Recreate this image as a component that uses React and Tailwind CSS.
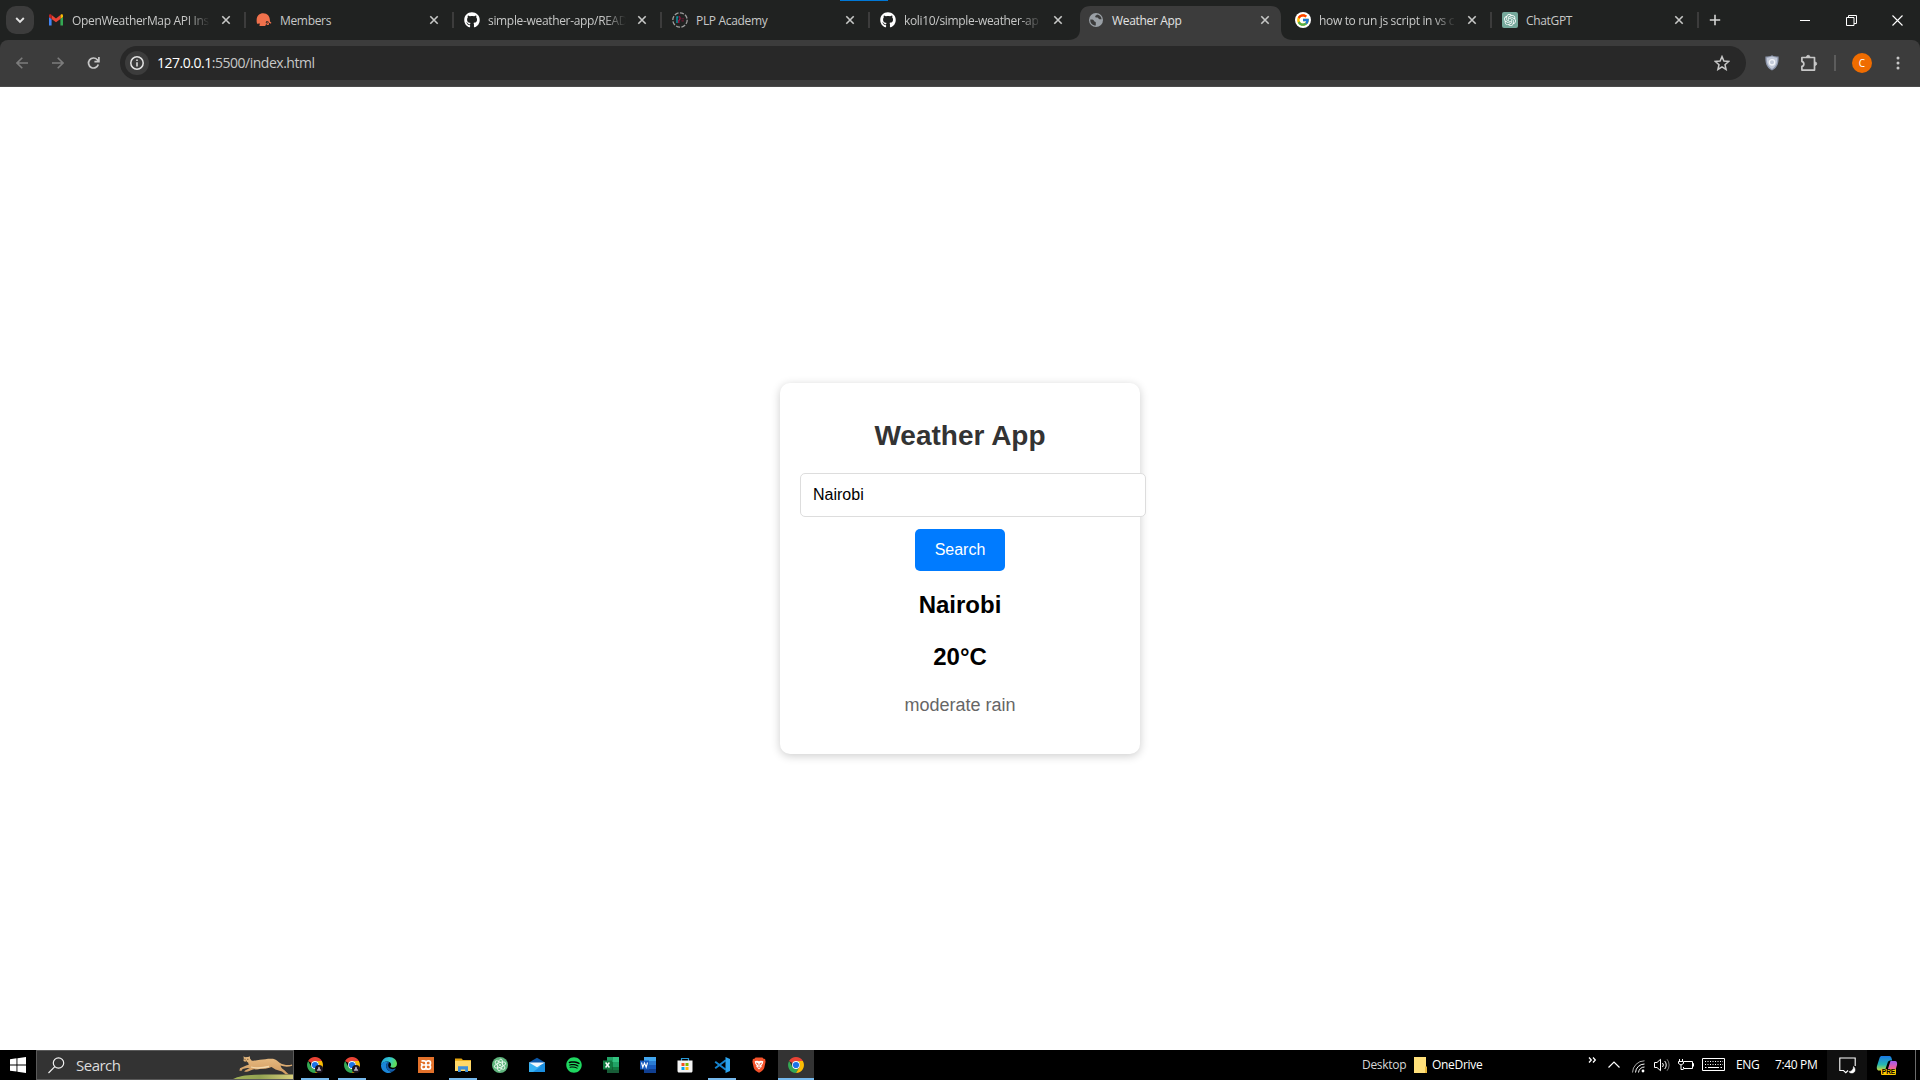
import React from "react";
import { FaGithub, FaSpotify } from "react-icons/fa";
import { FcGoogle } from "react-icons/fc";
import { SiOpenai } from "react-icons/si";

const UI = "font-['Open_Sans','Noto_Sans',sans-serif]";

function Close() {
  return (
    <svg width="16" height="16" viewBox="0 0 16 16" className="shrink-0" fill="none" stroke="#c7c8c7" strokeWidth="1.6">
      <path d="M4.3 4.3l7.4 7.4M11.7 4.3l-7.4 7.4" />
    </svg>
  );
}

function Gmail() {
  return (
    <svg width="16" height="16" viewBox="0 0 16 16">
      <path d="M1 13.4h2.6V7L1 5z" fill="#4285f4" />
      <path d="M12.4 13.4H15V5l-2.600 2z" fill="#34a853" />
      <path d="M12.400 3.600V7L15 5V3.600c0-1.300-1.300-1.700-2.200-1z" fill="#fbbc04" />
      <path d="M3.600 7V3.100L8 6.400l4.400-3.300V7L8 10.300z" fill="#ea4335" />
      <path d="M1 3.600V5l2.600 2V3.100L3.200 2.600C2.300 1.900 1 2.300 1 3.600z" fill="#c5221f" />
    </svg>
  );
}

function Members() {
  return (
    <svg width="16" height="16" viewBox="0 0 16 16" fill="#f0714c">
      <path d="M.8 10.500C-.2 4.500 3 1.200 7.200 1.200c4.300 0 6.900 3 6.800 8.300l1.400 1.300-.5 1-1.700-1-.5 2.200H11l-.8-1.200-1 2.200H3.400l.5-2.600-2.900.300z" />
      <circle cx="11.200" cy="10.200" r="1.300" fill="#202221" />
      <circle cx="11.200" cy="10.200" r=".6" />
    </svg>
  );
}

function Plp() {
  return (
    <svg width="16" height="16" viewBox="0 0 16 16" fill="none">
      <circle cx="8" cy="8" r="7.200" stroke="#9b9b9b" strokeWidth="1.300" strokeDasharray="4.200 1.400" />
      <path d="M5 11V5h1.300" stroke="#0a98a8" strokeWidth="1.400" />
      <path d="M6.800 4.500c1.700 0 1.700 3.500 0 4V11" stroke="#b01548" strokeWidth="1.200" />
      <path d="M9.500 6.700h2.600M9.500 8.900h2.300" stroke="#6b1a34" strokeWidth="1.100" />
    </svg>
  );
}

function Globe() {
  return (
    <svg width="14" height="14" viewBox="0 0 14 14">
      <circle cx="7" cy="7" r="7" fill="#9aa0a6" />
      <path d="M1.300 6.500c1.800-.2 3.400.2 3.800 1.500.3.900 1.700.4 1.700 1.500v3.100C3.300 12.500 1 10 1.300 6.500zM8 1.400c-.3 1-1.800.9-1.800 2 0 1 .9 1.200 2.200 1.200 1 0 .8 1.600 2 1.600h2.200C12.500 3.600 10.500 1.500 8 1.400z" fill="#3c3c3c" />
    </svg>
  );
}

function GoogleIcon() {
  return (
    <span className="flex h-4 w-4 items-center justify-center rounded-full bg-white">
      <FcGoogle size={14} />
    </span>
  );
}

function Gpt() {
  return (
    <span className="flex h-4 w-4 items-center justify-center rounded-[2px] bg-[#75a99c]">
      <SiOpenai size={12} color="#fff" />
    </span>
  );
}

const github = <FaGithub size={16} color="#fff" />;

const tabs = [
  { icon: <Gmail />, title: "OpenWeatherMap API Ins", w: "w-[208px]", fade: true },
  { icon: <Members />, title: "Members", w: "w-[208px]" },
  { icon: github, title: "simple-weather-app/READ", w: "w-[208px]", fade: true },
  { icon: <Plp />, title: "PLP Academy", w: "w-[208px]" },
  { icon: github, title: "koli10/simple-weather-ap", w: "w-[208px]", fade: true, noSep: true },
  { icon: <Globe />, title: "Weather App", w: "w-[207px]", active: true },
  { icon: <GoogleIcon />, title: "how to run js script in vs c", w: "w-[207px]", fade: true },
  { icon: <Gpt />, title: "ChatGPT", w: "w-[207px]" },
];

function Tab({ icon, title, w, fade, active, noSep }) {
  return (
    <div className={`relative flex h-full shrink-0 items-center ${w}`}>
      {active && (
        <svg className="absolute left-[-10px] top-[6px]" width="225" height="34" viewBox="0 0 225 34" fill="#3c3c3c">
          <path d="M0 34c8 0 12-4 12-11V10C12 4 16 0 22 0h181c6 0 10 4 10 10v13c0 7 4 11 12 11z" />
        </svg>
      )}
      <div className="relative flex h-full w-full items-center pl-[10px]">
        <span className="flex h-4 w-4 shrink-0 items-center justify-center">{icon}</span>
        <span
          className={`ml-2 mt-[2px] min-w-0 flex-1 whitespace-nowrap text-[12px] leading-5 tracking-[-0.33px] ${active ? "text-[#e3e3e3]" : "text-[#c7c8c7]"} ${fade ? "[mask-image:linear-gradient(to_right,black_84%,transparent)]" : ""}`}
        >
          {title}
        </span>
        <span className="ml-2 mr-3 flex"><Close /></span>
      </div>
      {!active && !noSep && <span className="absolute right-0 top-3 h-4 w-[2px] bg-[#3c3c3c]" />}
    </div>
  );
}

function TabStrip() {
  return (
    <div className="relative flex h-10 shrink-0 bg-[#202221]">
      <div className="flex w-[38px] items-center pl-[6px]">
        <div className="flex h-7 w-7 items-center justify-center rounded-[10px] bg-[#3c3c3c]">
          <svg width="10" height="8" viewBox="0 0 10 8" fill="none" stroke="#e3e3e3" strokeWidth="1.900">
            <path d="M1.200 2L5 5.800 8.800 2" />
          </svg>
        </div>
      </div>
      {tabs.map((t, i) => (
        <Tab key={i} {...t} />
      ))}
      <div className="flex w-8 items-center justify-center">
        <svg width="12" height="12" viewBox="0 0 12 12" stroke="#d4d5d4" strokeWidth="1.600">
          <path d="M6 .8v10.400M.8 6h10.400" />
        </svg>
      </div>
      <div className="ml-auto flex items-center">
        <span className="flex w-[46px] justify-center">
          <svg width="10" height="10" stroke="#fff"><path d="M0 5.500h10" /></svg>
        </span>
        <span className="flex w-[46px] justify-center">
          <svg width="11" height="11" fill="none" stroke="#fff">
            <path d="M.5 2.500h7.500v8H.5zM2.500 2.500V.500h8v8H8" />
          </svg>
        </span>
        <span className="flex w-[46px] justify-center">
          <svg width="11" height="11" stroke="#fff" strokeWidth="1.100"><path d="M.5.500l10 10M10.500.500l-10 10" /></svg>
        </span>
      </div>
      <span className="absolute left-[840px] top-0 h-px w-12 bg-[#0078d7]" />
    </div>
  );
}

function Toolbar() {
  return (
    <div className="h-[47px] shrink-0 bg-[#202221]">
      <div className="flex h-full items-start rounded-t-[8px] border-b border-[#4a4a4a] bg-[#3c3c3c] pt-[6px]">
        <div className="flex h-[34px] w-[120px] items-center">
          <svg className="ml-4" width="12" height="12" viewBox="0 0 12 12" fill="none" stroke="#7c7c7c" strokeWidth="1.600">
            <path d="M12 6H1.200M6.300.700L1 6l5.300 5.300" />
          </svg>
          <svg className="ml-6" width="12" height="12" viewBox="0 0 12 12" fill="none" stroke="#7c7c7c" strokeWidth="1.600">
            <path d="M0 6h10.800M5.700.700L11 6l-5.300 5.300" />
          </svg>
          <svg className="ml-[23px]" width="13" height="14" viewBox="0 0 13 14" fill="none" stroke="#c7c7c7" strokeWidth="1.700">
            <path d="M11.300 8.500A5 5 0 1 1 10.300 3.700L11.500 5M11.900 1v4.600H7.400" />
          </svg>
        </div>
        <div className="flex h-[34px] w-[1626px] items-center rounded-full bg-[#282828] pl-[5px]">
          <span className="flex h-6 w-6 items-center justify-center rounded-full bg-[#3c3c3c]">
            <svg width="14" height="14" viewBox="0 0 14 14" fill="none" stroke="#e3e3e3" strokeWidth="1.500">
              <circle cx="7" cy="7" r="6.200" />
              <path d="M7 6.200v4.200M7 3.600v1.500" />
            </svg>
          </span>
          <span className="ml-2 text-[14px] leading-5 tracking-[-0.48px] text-[#c7c7c7]">
            <span className="text-white">127.0.0.1</span>:5500/index.html
          </span>
          <svg className="ml-auto mr-[16px]" width="16" height="16" viewBox="0 0 16 16" fill="none" stroke="#c7c7c7" strokeWidth="1.500">
            <path d="M8 1.600l1.900 4.500 4.800.4-3.700 3.200 1.100 4.800L8 11.900l-4.100 2.600L5 9.700 1.300 6.500l4.800-.4z" />
          </svg>
        </div>
        <div className="flex h-[34px] flex-1 items-center">
          <svg className="ml-[19px]" width="14" height="16" viewBox="0 0 14 16">
            <path d="M7 .3c2 1 4.200 1.300 6.600 1.300.2 6-.6 11-6.600 14C1 12.600.2 7.600.4 1.600 2.800 1.600 5 1.300 7 .3z" fill="#8d96ab" />
            <path d="M7 1.600c1.800.8 3.500 1.100 5.300 1.200 0 5-.7 8.600-5.300 11.200C2.400 11.400 1.700 7.800 1.700 2.800 3.500 2.700 5.200 2.400 7 1.600z" fill="#c3cad9" />
            <circle cx="7" cy="7.300" r="2.700" fill="none" stroke="#f3f5f9" strokeWidth="1.300" />
          </svg>
          <svg className="mb-px ml-[21px]" width="18" height="18" viewBox="0 0 18 18" fill="none" stroke="#c7c7c7" strokeWidth="1.700">
            <path d="M1.900 3.500h12.600v12.600H1.900v-3.700c2.600-.2 2.600-4.600 0-4.800z" strokeLinejoin="round" />
            <path d="M6.500 3a1.700 1.700 0 0 1 3.400 0zM15 8a1.700 1.700 0 0 1 0 3.400z" fill="#c7c7c7" strokeWidth=".8" />
          </svg>
          <span className="ml-4 h-4 w-[2px] bg-[#5c5c5c]" />
          <span className="ml-4 flex h-5 w-5 items-center justify-center rounded-full bg-[#ef6c00] text-[10px] leading-none text-white">C</span>
          <svg className="ml-[24px]" width="4" height="18" viewBox="0 0 4 18" fill="#c7c7c7">
            <circle cx="2" cy="4" r="1.500" /><circle cx="2" cy="9" r="1.500" /><circle cx="2" cy="14" r="1.500" />
          </svg>
        </div>
      </div>
    </div>
  );
}

function WeatherCard() {
  return (
    <section className="flex h-[371px] w-[360px] flex-col items-center rounded-[10px] bg-white px-5 pt-[37px] font-['Liberation_Sans',Arial,sans-serif] shadow-[0_2px_10px_rgba(0,0,0,0.2)]">
      <h1 className="text-[28px] font-bold leading-8 text-[#333]">Weather App</h1>
      <div className="mt-[21px] flex h-11 w-[346px] shrink-0 items-center self-start rounded-[5px] border border-[#ddd] bg-white px-3 text-base leading-[18px] text-black">
        Nairobi
      </div>
      <button className="mt-3 h-[42px] w-[90px] shrink-0 rounded-[5px] bg-[#007bff] text-base leading-[18px] text-white">Search</button>
      <h2 className="mt-5 text-[24px] font-bold leading-[27px] text-black">Nairobi</h2>
      <h2 className="mt-[25px] text-[24px] font-bold leading-[27px] text-black">20°C</h2>
      <p className="mt-[25px] text-[18px] leading-[21px] text-[#666]">moderate rain</p>
    </section>
  );
}

function Chrome() {
  return (
    <svg width="16" height="16" viewBox="0 0 16 16">
      <path d="M1.100 4A8 8 0 0 1 14.900 4H8a4 4 0 0 0-3.500 2z" fill="#ea4335" />
      <path d="M1.100 4A8 8 0 0 0 8 16l3.500-6a4 4 0 0 1-7 0z" fill="#34a853" />
      <path d="M14.900 4H8a4 4 0 0 1 3.500 6L8 16A8 8 0 0 0 14.900 4z" fill="#fbbc04" />
      <circle cx="8" cy="8" r="3.900" fill="#fff" />
      <circle cx="8" cy="8" r="3.100" fill="#1a73e8" />
    </svg>
  );
}

function ChromeProfile() {
  return (
    <span className="relative flex">
      <Chrome />
      <svg className="absolute left-[8px] top-[8px]" width="8" height="8" viewBox="0 0 9 9">
        <circle cx="4.500" cy="4.500" r="4.500" fill="#1b1420" />
        <path d="M2 6.500c.2-1.600 1.200-1.700 1.500-2.500C3.300 2.600 4 2 4.500 2s1.200.6 1 2c.3.800 1.300.9 1.500 2.500z" fill="#b9b2c4" />
      </svg>
    </span>
  );
}

function Edge() {
  return (
    <svg width="16" height="16" viewBox="0 0 16 16">
      <defs>
        <linearGradient id="edgeTop" x1="0" y1="0" x2="1" y2=".3">
          <stop offset="0" stopColor="#1c9fe0" /><stop offset=".6" stopColor="#35c8c9" /><stop offset="1" stopColor="#5fdc5a" />
        </linearGradient>
      </defs>
      <path d="M0 8C.3 3.500 3.500 0 8 0c4.700 0 8 3.200 8 6.700 0 2.500-1.800 4-4 4-1.700 0-2.600-.6-2.600-1.200 0-.5.700-.8.700-2C10.100 5.800 8.300 4.500 6 4.500 3.500 4.500 1 5.800 0 8z" fill="url(#edgeTop)" />
      <path d="M0 8c.8-2.200 3-3.500 5.400-3.500 1 0 1.700.2 2.300.5C6 5.800 5.200 7.200 5.200 9c0 3.300 3 5.800 6 5.800-1 .8-2.300 1.200-3.600 1.200C3.400 16-.2 12.500 0 8z" fill="#1a86d8" />
      <path d="M7.700 5C6 5.800 5.200 7.200 5.200 9c0 3.300 3 5.800 6 5.800 1.500-.6 2.700-1.700 3.400-2.800.2-.3-.1-.5-.4-.4-3.700 1.500-7 .1-7-3C7.200 6.900 7.700 6 8.500 5.500z" fill="#125cab" />
    </svg>
  );
}

function Xampp() {
  return (
    <svg width="16" height="16" viewBox="0 0 16 16" fill="none">
      <path d="M0 0h16v16H0z" fill="#e3712a" />
      <path d="M3.500 3.800h2.300c1.300 0 2.200.8 2.200 2v4.400c0 1.200-.9 2-2.200 2H5.200c-1.100 0-1.700-.8-1.700-2.100S4.100 8 5.200 8h5.600c1.100 0 1.700-.8 1.700-2.100s-.6-2.100-1.700-2.100h-.6C8.900 3.800 8 4.600 8 5.800M8 10.200c0 1.200.9 2 2.200 2h.6c1.100 0 1.700-.8 1.700-2.100S11.900 8 10.800 8M5.200 8c-1 0-1.600-.7-1.600-2" stroke="#fff" strokeWidth="1.700" />
    </svg>
  );
}

function Folder() {
  return (
    <svg width="16" height="16" viewBox="0 0 16 16">
      <path d="M0 1.500h6.500L8 3h8v3H0z" fill="#e5a50f" />
      <path d="M0 3.800h16V14H0z" fill="#ffd869" />
      <path d="M3 9.200h10V15h-2.800v-2.600H5.800V15H3z" fill="#3d8fdb" />
    </svg>
  );
}

function AtomIcon() {
  return (
    <svg width="16" height="16" viewBox="0 0 16 16" fill="none" stroke="#e9f7ee" strokeWidth=".9">
      <circle cx="8" cy="8" r="8" fill="#5fb57d" stroke="none" />
      <ellipse cx="8" cy="8" rx="2.400" ry="6" transform="rotate(10 8 8)" />
      <ellipse cx="8" cy="8" rx="2.400" ry="6" transform="rotate(70 8 8)" />
      <ellipse cx="8" cy="8" rx="2.400" ry="6" transform="rotate(130 8 8)" />
      <circle cx="8" cy="8" r="1" fill="#e9f7ee" stroke="none" />
    </svg>
  );
}

function Mail() {
  return (
    <svg width="16" height="16" viewBox="0 0 16 16">
      <path d="M0 5.500L8 .8l8 4.700v3H0z" fill="#0b57a8" />
      <path d="M16 5.500V15H0z" fill="#1b8fe0" />
      <path d="M0 5.500V15h4l8-6z" fill="#36b1f2" />
      <path d="M0 5.500h16L8 10.300z" fill="#eef7fd" />
    </svg>
  );
}

function Excel() {
  return (
    <svg width="16" height="16" viewBox="0 0 16 16">
      <path d="M4 0h6v8H4z" fill="#21a366" /><path d="M10 0h6v5h-6z" fill="#33c481" />
      <path d="M4 5h6v6H4z" fill="#107c41" /><path d="M10 5h6v5h-6z" fill="#21a366" />
      <path d="M4 10h12v6H4z" fill="#185c37" /><path d="M10 10h6v3h-6z" fill="#107c41" />
      <path d="M0 3.500h9v9H0z" fill="#107c41" />
      <path d="M2.600 5.500l3.800 5M6.400 5.500l-3.800 5" stroke="#fff" strokeWidth="1.400" />
    </svg>
  );
}

function Word() {
  return (
    <svg width="16" height="16" viewBox="0 0 16 16">
      <path d="M4 0h12v4H4z" fill="#41a5ee" /><path d="M4 4h12v4H4z" fill="#2b7cd3" />
      <path d="M4 8h12v4H4z" fill="#185abd" /><path d="M4 12h12v4H4z" fill="#103f91" />
      <path d="M0 3.500h9v9H0z" fill="#185abd" />
      <path d="M1.500 5.500l1.300 4.700L4.500 6l1.700 4.200 1.300-4.700" stroke="#fff" strokeWidth="1.100" fill="none" />
    </svg>
  );
}

function Store() {
  return (
    <svg width="16" height="16" viewBox="0 0 16 16">
      <path d="M4.500 5V1.500h7V5" fill="none" stroke="#2a9bd8" strokeWidth="1.200" />
      <path d="M.5 3.500h15V14c0 .8-.5 1.500-1.500 1.500H2c-1 0-1.500-.7-1.500-1.500z" fill="#f2f2f2" />
      <path d="M4.500 6h3v3h-3z" fill="#f25022" /><path d="M8.500 6h3v3h-3z" fill="#7fba00" />
      <path d="M4.500 10h3v3h-3z" fill="#00a4ef" /><path d="M8.500 10h3v3h-3z" fill="#ffb900" />
    </svg>
  );
}

function VsCode() {
  return (
    <svg width="16" height="16" viewBox="0 0 16 16" fill="none">
      <path d="M11.800 3.200L1.200 11.300M11.800 12.800L1.200 4.700" stroke="#1684cf" strokeWidth="2" />
      <path d="M11.500 0L16 1.900v12.200L11.500 16z" fill="#2ba3ee" />
    </svg>
  );
}

function Brave() {
  return (
    <svg width="16" height="16" viewBox="0 0 16 16">
      <path d="M4.600.400h6.800l1.200 1.400 1.500.3.500 2.600-1.400 6.300c-.6 2-3 3.600-5.200 4.800-2.200-1.200-4.600-2.800-5.200-4.800L1.400 4.700l.5-2.600 1.500-.3z" fill="#f4522b" />
      <path d="M3.700 4.200l2.400-.5L8 4.200l1.900-.5 2.400.5-.5 2.600-1.400 1.800.3 1.200L8 12.400 5.300 9.800l.3-1.200-1.400-1.800z" fill="#fff" />
      <path d="M5 6l2 .6L6.600 8M11 6l-2 .6.400 1.400M8 7.500v2M6.500 10.300h3" stroke="#f4522b" strokeWidth=".8" fill="none" />
    </svg>
  );
}

const apps = [
  { icon: <ChromeProfile />, open: true },
  { icon: <ChromeProfile />, open: true },
  { icon: <Edge /> },
  { icon: <Xampp /> },
  { icon: <Folder />, open: true },
  { icon: <AtomIcon /> },
  { icon: <Mail /> },
  { icon: <FaSpotify size={16} color="#1ed760" /> },
  { icon: <Excel /> },
  { icon: <Word /> },
  { icon: <Store /> },
  { icon: <VsCode />, open: true },
  { icon: <Brave /> },
  { icon: <Chrome />, open: true, active: true },
];

function Cheetah() {
  return (
    <svg className="ml-auto self-stretch" width="62" height="28" viewBox="0 0 62 28">
      <defs>
        <linearGradient id="hill" x1="0" y1="0" x2="1" y2="0">
          <stop offset="0" stopColor="#a3b356" /><stop offset=".45" stopColor="#93a352" /><stop offset="1" stopColor="#d9cf7c" />
        </linearGradient>
        <linearGradient id="fur" x1="0" y1="0" x2="0" y2="1">
          <stop offset="0" stopColor="#e9bd83" /><stop offset="1" stopColor="#cf9a60" />
        </linearGradient>
      </defs>
      <path d="M2 28c5-2.500 12-4 22-4.300 12-.5 25-.3 38-.2V28z" fill="url(#hill)" />
      <path d="M12.500 5.300l1.500 1 3.200-.2 1.600-.9.200 2.300 1.500 2c3 .6 5.500-.6 8.500-.8 4.500-.4 9-1.400 13-.9 3.300.5 4.700 2.600 7 4.200 3 1.800 6.500 2.300 10 2l2-.4.2 1.200c-4 1.300-8.200 1-11.700-.2.500 2 2 3.500 4 4.600l3 3 1.300 1h-3.300l-3.500-2.600-6.500-2-4-2.500c-3.500 1.600-7 2-11 1.600-3 1-5.500.5-7.500.8-3 1-5 2.300-6.300 2.200h-2.500l.9-1.200 4.700-2.400-2.700-.2-4.500 1.200-1 1.700H8.400l.6-2.600 6.200-2.600 2.600-.8-.8-2.500-2.200-.4-2.300-1 .3-2.300z" fill="url(#fur)" />
      <path d="M20 16c6 1.800 12 1 18-.5" stroke="#f3d9ae" strokeWidth="1.300" fill="none" />
      <path d="M13.500 8.300h1M16.300 8.300h1M14.500 10.300h1.500" stroke="#4a321c" strokeWidth=".9" />
    </svg>
  );
}

function Tray() {
  return (
    <div className="flex h-full items-center text-white">
      <span className="w-[43px] whitespace-nowrap text-[12px] leading-4 tracking-[-0.3px] text-[#d6d6d6]">Desktop</span>
      <svg className="ml-[9px]" width="14" height="16" viewBox="0 0 14 16">
        <path d="M0 0h12v10l1 .5V16H0z" fill="#ffe07a" /><path d="M11 9.500h2V16h-2z" fill="#eab93c" />
      </svg>
      <span className="ml-[4px] w-[156px] text-[12px] leading-4 tracking-[-0.3px]">OneDrive</span>
      <svg className="mb-[10px]" width="9" height="6" viewBox="0 0 9 6" fill="none" stroke="#fff" strokeWidth="1.300">
        <path d="M1 .500L3.300 3 1 5.500M5 .500L7.300 3 5 5.500" />
      </svg>
      <svg className="ml-[11px]" width="12" height="8" viewBox="0 0 12 8" fill="none" stroke="#fff" strokeWidth="1.200"><path d="M.5 6.500L6 1l5.500 5.500" /></svg>
      <svg className="ml-[12px] mt-[2px]" width="13" height="13" viewBox="0 0 13 13" fill="none" stroke="#fff" strokeWidth="1">
        <path d="M.5 12.500A12 12 0 0 1 12.500.800" stroke="#a8a8a8" />
        <path d="M3.500 12.500a9 9 0 0 1 9-8.500M6.500 12.500a6 6 0 0 1 6-5.500" />
        <circle cx="11" cy="11" r="1.400" fill="#fff" stroke="none" />
      </svg>
      <svg className="ml-[9px]" width="17" height="14" viewBox="0 0 17 14" fill="none" stroke="#fff">
        <path d="M.5 4.500H3l3.500-3.200v11.400L3 9.500H.5zM8.500 5a3 3 0 0 1 0 4M10.700 3a6 6 0 0 1 0 8" />
        <path d="M13 1.200a9 9 0 0 1 0 11.600" stroke="#777" />
      </svg>
      <svg className="ml-[7px]" width="16" height="12" viewBox="0 0 16 12" fill="none" stroke="#fff">
        <path d="M6 2.500h8.500v7H5.500V8M14.500 4.500h1v3M1.500 0v2M4.500 0v2M.5 2.500h5v2L3 6 .500 4.500zM3 6v4.500h2.500" />
      </svg>
      <svg className="ml-[8px]" width="24" height="14" viewBox="0 0 24 14" fill="none" stroke="#fff">
        <path d="M.5.500h22v12H.5z" /><path d="M3 3.500h18M3 6.500h18" strokeDasharray="1 1.500" /><path d="M3 9.500h1.500M6 9.500h11M18.500 9.500H20" />
      </svg>
      <span className="ml-[10px] w-[39px] text-[12px] leading-4 tracking-[-0.4px]">ENG</span>
      <span className="w-[52px] whitespace-nowrap text-[12px] leading-4 tracking-[-0.35px]">7:40 PM</span>
      <span className="flex h-full w-10 items-center justify-center bg-[#101010]">
        <svg width="17" height="17" viewBox="0 0 17 17" fill="none" stroke="#fff" strokeWidth="1.100">
          <path d="M9 13.500l-2.200 2.200-2.300-2.200H.800V1h15.400v8" />
          <path d="M14.500 9.500c0 3-1.500 4.800-4.500 5.200 1 1.800 5 2 5.900-.7.500-1.700-.2-3.500-1.400-4.500z" fill="#fff" strokeWidth=".5" />
        </svg>
      </span>
      <span className="relative ml-[9px] flex h-6 w-[22px] items-center justify-center">
        <svg width="22" height="20" viewBox="0 0 22 20">
          <defs>
            <linearGradient id="copA" x1="0" y1="0" x2="0" y2="1"><stop offset="0" stopColor="#1a78e6" /><stop offset=".6" stopColor="#25b8b0" /><stop offset="1" stopColor="#c9dc3c" /></linearGradient>
            <linearGradient id="copB" x1="0" y1="0" x2="0" y2="1"><stop offset="0" stopColor="#a05cf0" /><stop offset=".5" stopColor="#e85fa6" /><stop offset="1" stopColor="#ff9a5a" /></linearGradient>
          </defs>
          <path d="M6 1h7.500c1.200 0 1.700 1 2 2l.7 2.500h-2c-1.500 0-2.200 1-2.600 2.200L9.500 14c-.3 1-1 1.500-2 1.500H3C.8 15.500.5 13 1 11L3.500 3C4 1.600 4.800 1 6 1z" fill="url(#copA)" />
          <path d="M14.500 6H19c2 0 2.400 2 2 4l-2 6.500c-.4 1.200-1 2-2.500 2H9c1.300 0 1.800-1 2.200-2.200z" fill="url(#copB)" />
        </svg>
        <span className="absolute bottom-[2px] right-[2px] flex h-[6px] w-[15px] items-center justify-center rounded-[1px] bg-[#ffc800] font-['Liberation_Sans',sans-serif] text-[6.5px] font-bold leading-[6px] text-black">PRE</span>
      </span>
      <span className="ml-[17px] h-full w-px bg-[#6b6b6b]" />
      <span className="w-1" />
    </div>
  );
}

function Taskbar() {
  return (
    <div className="flex h-[30px] shrink-0 items-stretch bg-black">
      <div className="flex w-9 items-center justify-center">
        <svg width="16" height="16" viewBox="0 0 16 16" fill="#fff">
          <path d="M0 2.200L6.500 1.300V7.500H0zM7.400 1.200L16 0v7.500H7.400zM0 8.400h6.500v6.200L0 13.700zM7.400 8.400H16V16l-8.600-1.200z" />
        </svg>
      </div>
      <div className="flex w-[258px] items-center border border-[#5a5a5a] bg-[#333]">
        <svg className="ml-[11px]" width="17" height="17" viewBox="0 0 17 17" fill="none" stroke="#f0f0f0" strokeWidth="1.200">
          <circle cx="10.500" cy="6" r="5.200" /><path d="M6.800 9.700L.5 16" />
        </svg>
        <span className="ml-[11px] text-[15px] leading-5 tracking-[-0.5px] text-[#dcdcdc]">Search</span>
        <Cheetah />
      </div>
      <div className="ml-[2px] flex">
        {apps.map((a, i) => (
          <div key={i} className="flex w-[37px] justify-center">
            <div className={`flex h-full w-9 flex-col items-center ${a.active ? "bg-[#333]" : ""}`}>
              <span className="flex h-7 items-start pt-[7px]">{a.icon}</span>
              {a.open && <span className={`h-[2px] bg-[#76b9ed] ${a.active ? "w-9" : "w-7"}`} />}
            </div>
          </div>
        ))}
      </div>
      <div className="ml-auto">
        <Tray />
      </div>
    </div>
  );
}

export default function App() {
  return (
    <div className={`flex h-[1080px] w-[1920px] flex-col overflow-hidden bg-white ${UI}`}>
      <TabStrip />
      <Toolbar />
      <main className="flex min-h-0 flex-1 items-center justify-center bg-white">
        <WeatherCard />
      </main>
      <Taskbar />
    </div>
  );
}
